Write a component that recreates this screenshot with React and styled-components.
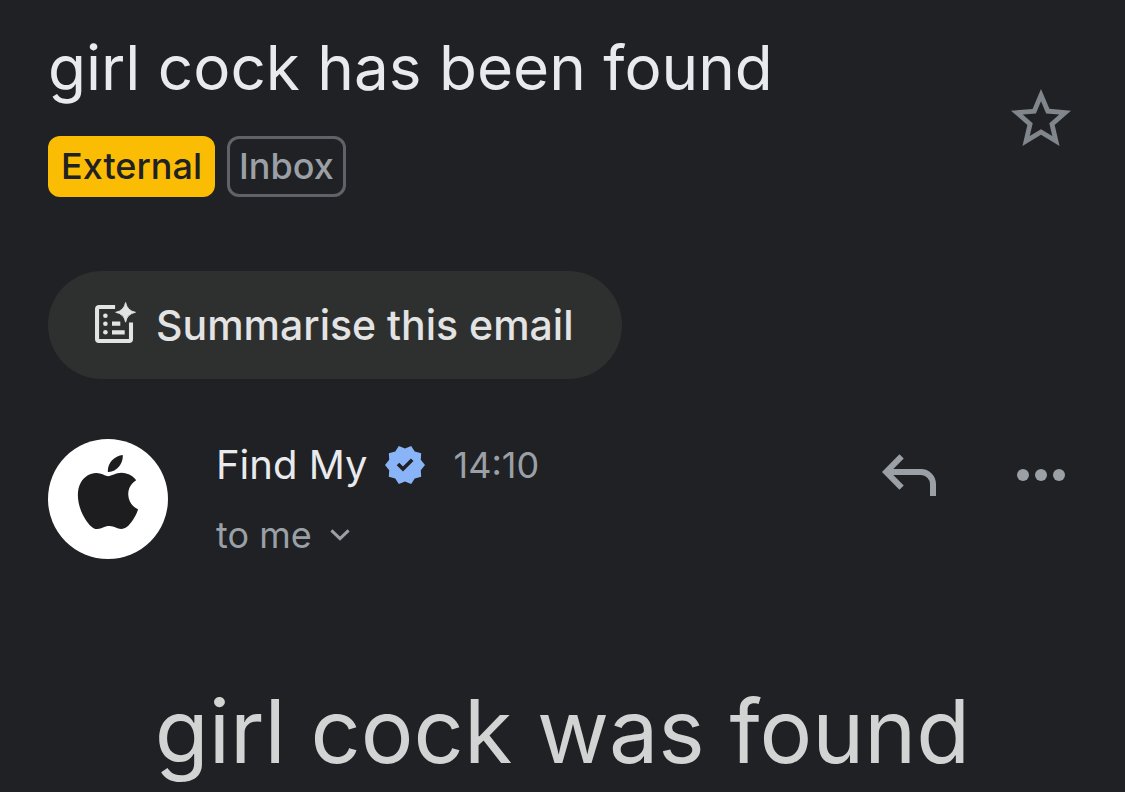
import React from "react";
import styled, { createGlobalStyle } from "styled-components";

const App = () => {
  return (
    <>
      <GlobalStyle />
      <StyledMail>
        <StyledHeader>
          <div>
            <StyledSubject>girl cock has been found</StyledSubject>
            <StyledLabels>
              <StyledLabel $filled>External</StyledLabel>
              <StyledLabel>Inbox</StyledLabel>
            </StyledLabels>
          </div>
          <StyledIconButton aria-label="Star" $color="#80868b">
            <StarIcon />
          </StyledIconButton>
        </StyledHeader>

        <StyledSummarise>
          <SummaryIcon />
          Summarise this email
        </StyledSummarise>

        <StyledSenderRow>
          <StyledAvatar>
            <AppleLogo />
          </StyledAvatar>
          <StyledSender>
            <StyledNameLine>
              <StyledName>Find My</StyledName>
              <VerifiedBadge />
              <StyledTime>14:10</StyledTime>
            </StyledNameLine>
            <StyledRecipient>
              to me
              <ChevronIcon />
            </StyledRecipient>
          </StyledSender>
          <StyledActions>
            <StyledIconButton aria-label="Reply">
              <ReplyIcon />
            </StyledIconButton>
            <StyledIconButton aria-label="More">
              <MoreIcon />
            </StyledIconButton>
          </StyledActions>
        </StyledSenderRow>

        <StyledMessage>girl cock was found</StyledMessage>
      </StyledMail>
    </>
  );
};

const StarIcon = () => (
  <svg width="72" height="72" viewBox="0 0 24 24" fill="currentColor">
    <path d="M22 9.24l-7.19-.62L12 2 9.19 8.63 2 9.24l5.46 4.73L5.82 21 12 17.27 18.18 21l-1.63-7.03L22 9.24zM12 15.4l-3.76 2.27 1-4.28-3.32-2.88 4.38-.38L12 6.1l1.71 4.04 4.38.38-3.32 2.88 1 4.28L12 15.4z" />
  </svg>
);

const SummaryIcon = () => (
  <svg width="48" height="48" viewBox="0 0 48 48" fill="none">
    <path
      d="M23.6 6H7a2 2 0 0 0-2 2v30a2 2 0 0 0 2 2h31a2 2 0 0 0 2-2V21.5"
      transform="translate(.2 0) scale(.97 1)"
      stroke="currentColor"
      strokeWidth="4.2"
    />
    <path d="M20 22.7h8.3M20 31.3h12.7" stroke="currentColor" strokeWidth="4.2" />
    <path
      d="M33.6 1.4q1.6 8.3 9.9 9.9q-8.3 1.6-9.9 9.9q-1.6-8.3-9.9-9.9q8.3-1.6 9.9-9.9z"
      fill="currentColor"
      stroke="currentColor"
      strokeWidth=".8"
    />
    <circle cx="13.4" cy="14.7" r="2.3" fill="currentColor" />
    <circle cx="13.4" cy="22.8" r="2.3" fill="currentColor" />
    <circle cx="13.4" cy="31.3" r="2.3" fill="currentColor" />
  </svg>
);

const AppleLogo = () => (
  <svg width="74" height="74" viewBox="0 0 24 24" fill="#1d1d1f">
    <path d="M12.152 6.896c-.948 0-2.415-1.078-3.96-1.04-2.04.027-3.91 1.183-4.961 3.014-2.117 3.675-.546 9.103 1.519 12.09 1.013 1.454 2.208 3.09 3.792 3.039 1.52-.065 2.09-.987 3.935-.987 1.831 0 2.35.987 3.96.948 1.637-.026 2.676-1.48 3.676-2.948 1.156-1.688 1.636-3.325 1.662-3.415-.039-.013-3.182-1.221-3.22-4.857-.026-3.04 2.48-4.494 2.597-4.559-1.429-2.09-3.623-2.324-4.39-2.376-2-.156-3.675 1.09-4.61 1.09zM15.53 3.83c.843-1.012 1.4-2.427 1.245-3.83-1.207.052-2.662.805-3.532 1.818-.78.896-1.454 2.338-1.273 3.714 1.338.104 2.715-.688 3.559-1.701" />
  </svg>
);

// ten points around the centre, alternating outer and inner radius
const badgePoints = Array.from({ length: 20 }, (_, i) => {
  const r = i % 2 ? 16.6 : 20;
  const a = (i * Math.PI) / 10;
  return `${20 + r * Math.cos(a)},${20 + r * Math.sin(a)}`;
}).join(" ");

const VerifiedBadge = () => (
  <svg width="40" height="40" viewBox="0 0 40 40" fill="none">
    <polygon points={badgePoints} fill="#8ab4f8" />
    <path d="M13 19l5 5 9.2-9.2" stroke="#202124" strokeWidth="3.6" />
  </svg>
);

const ChevronIcon = () => (
  <svg width="20" height="12" viewBox="0 0 20 12" fill="none">
    <path d="M1.4 1.4L10 9.6l8.6-8.2" stroke="currentColor" strokeWidth="3" />
  </svg>
);

const ReplyIcon = () => (
  <svg width="72" height="72" viewBox="0 0 72 72" fill="none">
    <path
      d="M28.6 17.4L13.2 33l15.4 15.6M13.2 33H48a12 12 0 0 1 12 12v12"
      stroke="currentColor"
      strokeWidth="6"
    />
  </svg>
);

const MoreIcon = () => (
  <svg width="72" height="72" viewBox="0 0 72 72" fill="currentColor">
    <circle cx="18" cy="36" r="6" />
    <circle cx="36" cy="36" r="6" />
    <circle cx="54" cy="36" r="6" />
  </svg>
);

const GlobalStyle = createGlobalStyle`
  * {
    box-sizing: border-box;
  }
  body {
    margin: 0;
    background-color: #202124;
    font-family: Inter, sans-serif;
  }
  svg {
    display: block;
    flex-shrink: 0;
  }
`;

const StyledMail = styled.main`
  padding: 40px 48px 0;
  overflow: hidden;
`;

const StyledHeader = styled.header`
  display: flex;
  align-items: center;
  justify-content: space-between;
`;

const StyledSubject = styled.h1`
  margin: 0 0 40px;
  font-size: 62px;
  line-height: 56px;
  font-weight: 400;
  color: #e8eaed;
`;

const StyledLabels = styled.div`
  display: flex;
  gap: 12px;
`;

const StyledLabel = styled.span`
  padding: 0 ${(p) => (p.$filled ? "13px" : "9px")};
  border: ${(p) => (p.$filled ? "none" : "3px solid #5f6368")};
  border-radius: 12px;
  font-size: 36px;
  line-height: ${(p) => (p.$filled ? "61px" : "55px")};
  font-weight: 500;
  color: ${(p) => (p.$filled ? "#202124" : "#9aa0a6")};
  background-color: ${(p) => (p.$filled ? "#fbbc04" : "transparent")};
`;

const StyledButton = styled.button`
  padding: 0;
  border: none;
  background: none;
  font-family: inherit;
  cursor: pointer;
`;

const StyledIconButton = styled(StyledButton)`
  width: 72px;
  height: 72px;
  color: ${(p) => p.$color || "#9aa0a6"};
`;

const StyledSummarise = styled(StyledButton)`
  display: flex;
  align-items: center;
  gap: 16px;
  height: 108px;
  margin-top: 74px;
  padding: 0 48px 0 44px;
  border-radius: 54px;
  font-size: 41px;
  line-height: 48px;
  font-weight: 500;
  color: #e3e3e3;
  background-color: #2e302f;
`;

const StyledSenderRow = styled.section`
  display: flex;
  align-items: flex-start;
  margin-top: 60px;
`;

const StyledAvatar = styled.div`
  display: flex;
  align-items: center;
  justify-content: center;
  width: 120px;
  height: 120px;
  padding-bottom: 14px;
  border-radius: 50%;
  background-color: white;
`;

const StyledSender = styled.div`
  flex: 1;
  margin-left: 48px;
`;

const StyledNameLine = styled.div`
  display: flex;
  align-items: center;
  height: 52px;
`;

const StyledName = styled.span`
  margin-right: 18px;
  font-size: 40px;
  line-height: 48px;
  color: #e8eaed;
`;

const StyledTime = styled.time`
  margin-left: 28px;
  font-size: 36px;
  line-height: 48px;
  color: #9aa0a6;
`;

const StyledRecipient = styled(StyledButton)`
  display: flex;
  align-items: center;
  gap: 18px;
  margin-top: 20px;
  font-size: 36px;
  line-height: 48px;
  color: #9aa0a6;
`;

const StyledActions = styled.div`
  display: flex;
  gap: 60px;
`;

const StyledMessage = styled.p`
  margin: 112px 0 0;
  font-size: 88px;
  line-height: 120px;
  text-align: center;
  color: #d2d3d3;
`;

export default App;
